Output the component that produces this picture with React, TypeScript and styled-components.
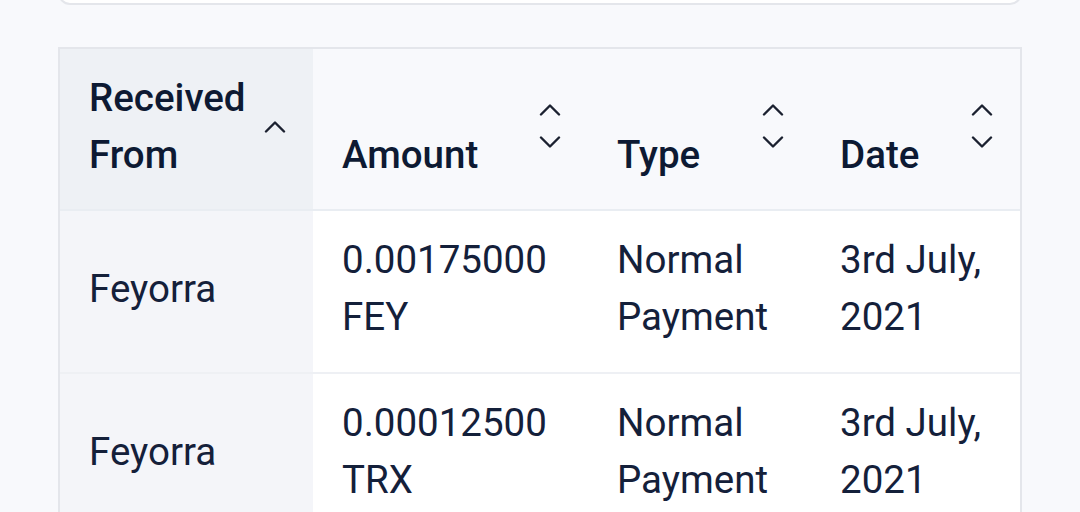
import React from 'react'
import styled, { createGlobalStyle } from 'styled-components'

const GlobalStyle = createGlobalStyle`
  body {
    margin: 0;
    background: #f8f9fc;
    font-family: Roboto, "Liberation Sans", sans-serif;
    color: #0f1b33;
  }
`

const Page = styled.div`
  padding: 0 58px;
  height: 512px;
  overflow: hidden;
`

const PrevCard = styled.div`
  margin-top: -20px;
  height: 21px;
  background: #ffffff;
  border: 2px solid #e4e6eb;
  border-radius: 12px;
`

const Table = styled.div`
  margin-top: 42px;
  display: grid;
  grid-template-columns: 253px 275px 223px 1fr;
  border: 2px solid #e4e6eb;
  border-bottom: none;
  background: #ffffff;
`

const HeadCell = styled.div<{ $sorted?: boolean }>`
  display: flex;
  justify-content: space-between;
  gap: 12px;
  padding: 20px 27px 26px 29px;
  background: ${p => (p.$sorted ? '#eef1f5' : '#f8f9fc')};
  border-bottom: 2px solid #e9edf2;
  font-size: 38.5px;
  line-height: 57px;
  font-weight: 500;
  color: #0d1a33;
`

const Title = styled.span`
  align-self: flex-end;
`

const Sorter = styled.span`
  align-self: center;
  display: flex;
  flex-direction: column;
  gap: 20px;
  flex-shrink: 0;
`

const Cell = styled.div<{ $sorted?: boolean }>`
  display: flex;
  align-items: center;
  padding: 20px 27px 27px 29px;
  background: ${p => (p.$sorted ? '#f4f5f9' : '#ffffff')};
  border-bottom: 2px solid #eef0f4;
  font-size: 38.5px;
  line-height: 57px;
  color: #14203a;
`

const Chevron = ({ up }: { up?: boolean }) => (
  <svg width="22" height="13" viewBox="0 0 22 13" fill="none">
    <path
      d={up ? 'M2 11.5 L11 2.5 L20 11.5' : 'M2 1.5 L11 10.5 L20 1.5'}
      stroke="#1b2130"
      strokeWidth="2.4"
      strokeLinecap="round"
      strokeLinejoin="round"
    />
  </svg>
)

const columns = [
  { title: 'Received From', sorted: true },
  { title: 'Amount' },
  { title: 'Type' },
  { title: 'Date' },
]

const rows = [
  { from: 'Feyorra', amount: '0.00175000 FEY', type: 'Normal Payment', date: '3rd July, 2021' },
  { from: 'Feyorra', amount: '0.00012500 TRX', type: 'Normal Payment', date: '3rd July, 2021' },
]

const App = () => (
  <Page>
    <GlobalStyle />
    <PrevCard />
    <Table>
      {columns.map(col => (
        <HeadCell key={col.title} $sorted={col.sorted}>
          <Title>{col.title}</Title>
          <Sorter>
            <Chevron up />
            {!col.sorted && <Chevron />}
          </Sorter>
        </HeadCell>
      ))}
      {rows.map((row, i) => (
        <React.Fragment key={i}>
          <Cell $sorted>{row.from}</Cell>
          <Cell>{row.amount}</Cell>
          <Cell>{row.type}</Cell>
          <Cell>{row.date}</Cell>
        </React.Fragment>
      ))}
    </Table>
  </Page>
)

export default App
